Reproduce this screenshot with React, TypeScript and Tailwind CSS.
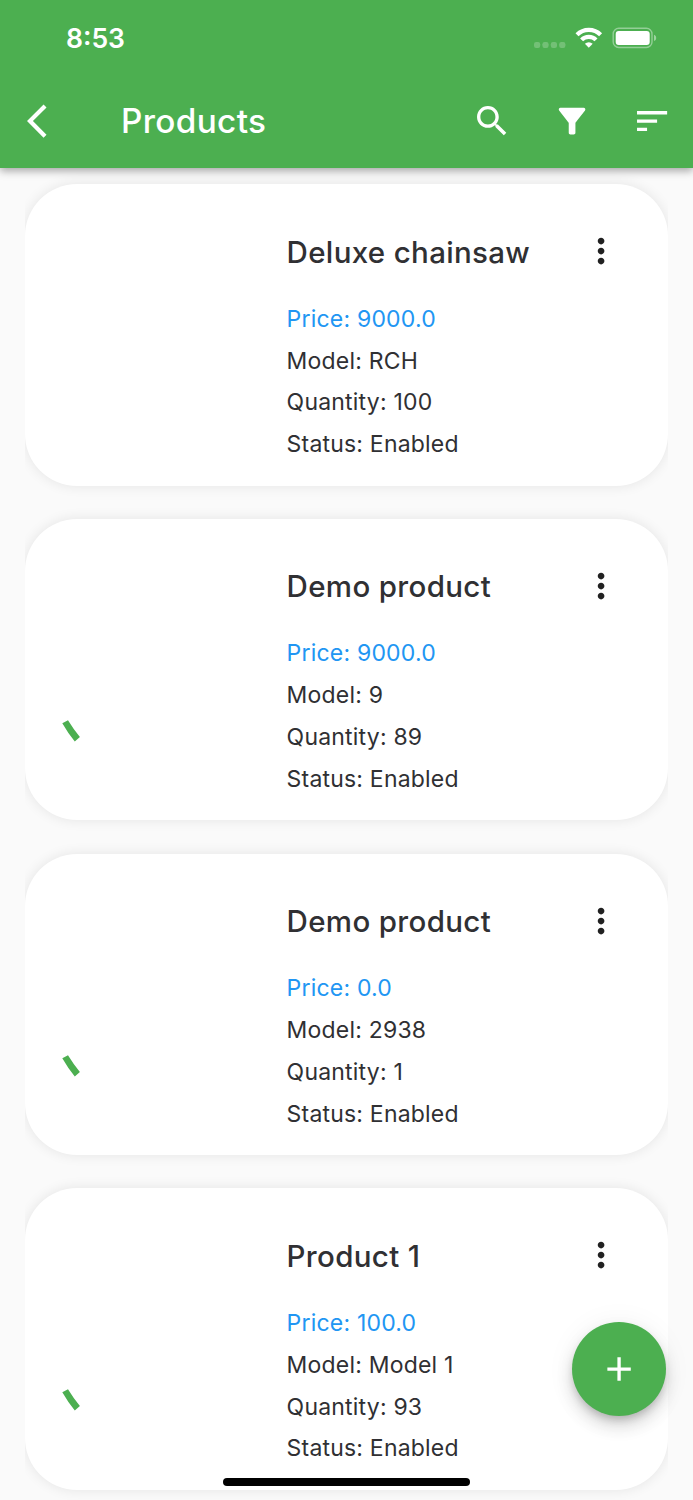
import type { ReactNode } from "react";

type Product = {
  name: string;
  price: string;
  model: string;
  quantity: string;
  loading: boolean;
};

const products: Product[] = [
  { name: "Deluxe chainsaw", price: "9000.0", model: "RCH", quantity: "100", loading: false },
  { name: "Demo product", price: "9000.0", model: "9", quantity: "89", loading: true },
  { name: "Demo product", price: "0.0", model: "2938", quantity: "1", loading: true },
  { name: "Product 1", price: "100.0", model: "Model 1", quantity: "93", loading: true },
];

function Icon({ d }: { d: string }) {
  return (
    <svg viewBox="0 0 24 24" className="block size-[40.17px] shrink-0" fill="currentColor">
      <path d={d} />
    </svg>
  );
}

function IconButton({ label, children }: { label: string; children: ReactNode }) {
  return (
    <button aria-label={label} className="flex size-[80px] shrink-0 items-center justify-center">
      {children}
    </button>
  );
}

function StatusBar() {
  return (
    <div className="flex h-[73.6px] items-start pl-[66px] pr-[36px]">
      <div className="mt-[22px] text-[26.5px] leading-[32px] font-semibold">8:53</div>
      <svg viewBox="0 0 124 24" width="124" height="24" className="mt-[26px] ml-auto block" fill="none">
        <g fill="#fff" opacity="0.22">
          <rect x="1" y="16" width="6.2" height="6" rx="2.2" />
          <rect x="9.4" y="16" width="6.2" height="6" rx="2.2" />
          <rect x="17.8" y="16" width="6.2" height="6" rx="2.2" />
          <rect x="26.2" y="16" width="6.2" height="6" rx="2.2" />
        </g>
        <g stroke="#fff" strokeWidth="4.2">
          <path d="M44 8.800A16.600 16.600 0 0 1 67.600 8.800" />
          <path d="M48.600 13.900A10 10 0 0 1 63 13.900" />
        </g>
        <path d="M51.900 17.800A5.800 5.800 0 0 1 59.700 17.800L55.800 21.800Z" fill="#fff" />
        <rect x="80.200" y="2.300" width="38.800" height="19.200" rx="5.600" stroke="#fff" strokeWidth="1.400" opacity="0.4" />
        <rect x="82.700" y="4.900" width="34" height="14" rx="3" fill="#fff" />
        <path d="M121 8.800c1.400.5 2.200 1.700 2.200 3.100s-.8 2.600-2.200 3.100z" fill="#fff" opacity="0.45" />
      </svg>
    </div>
  );
}

function ProductCard({ product }: { product: Product }) {
  return (
    <article className="flex h-[301.3px] w-full shrink-0 rounded-[52px] bg-white shadow-[0_0_13px_rgba(0,0,0,0.09)]">
      <div className="w-[261.6px] shrink-0 pt-[200px] pl-[36px]">
        {product.loading && (
          <svg viewBox="0 0 20 24" width="20" height="24" className="block" fill="#4caf50">
            <path d="M1.300 4.200 7 1.200Q12.600 10.400 18.900 17.900L13.800 22.600Q7 14.100 1.300 4.200Z" />
          </svg>
        )}
      </div>
      <div className="min-w-0 flex-1 pt-[27px]">
        <div className="flex h-[80px] items-center">
          <h2 className="flex-1 pt-[1px] text-[29.5px] leading-[40px] font-medium tracking-[0.33px] whitespace-nowrap text-[#303033]">
            {product.name}
          </h2>
          <div className="mr-[27px] text-[#212121]">
            <IconButton label="More">
              <Icon d="M12 8c1.100 0 2-.9 2-2s-.9-2-2-2-2 .9-2 2 .9 2 2 2zm0 2c-1.100 0-2 .9-2 2s.9 2 2 2 2-.9 2-2-.9-2-2-2zm0 6c-1.100 0-2 .9-2 2s.9 2 2 2 2-.9 2-2-.9-2-2-2z" />
            </IconButton>
          </div>
        </div>
        <div className="pt-[7.500px] text-[23px] leading-[41.85px] tracking-[0.2px] whitespace-nowrap text-[#303033]">
          <p className="text-[#2196f3]">Price: {product.price}</p>
          <p>Model: {product.model}</p>
          <p>Quantity: {product.quantity}</p>
          <p>Status: Enabled</p>
        </div>
      </div>
    </article>
  );
}

export default function App() {
  return (
    <div className="relative flex h-[1500px] w-[693px] flex-col overflow-hidden bg-[#fafafa] font-[Inter,sans-serif]">
      <header className="relative z-10 h-[167.6px] shrink-0 bg-[#4caf50] text-white shadow-[0_3px_8px_rgba(0,0,0,0.34)]">
        <StatusBar />
        <div className="flex h-[94px] items-center pl-[27px] pr-[1px]">
          <button aria-label="Back" className="flex w-[94px] shrink-0">
            <Icon d="M11.670 3.870L9.900 2.100 0 12l9.900 9.900 1.770-1.770L3.540 12z" />
          </button>
          <h1 className="flex-1 pt-[1px] text-[33.3px] leading-[40px] font-medium tracking-[0.35px]">Products</h1>
          <IconButton label="Search">
            <Icon d="M15.500 14h-.79l-.28-.27C15.410 12.590 16 11.110 16 9.500 16 5.910 13.090 3 9.500 3S3 5.910 3 9.500 5.910 16 9.500 16c1.610 0 3.090-.59 4.230-1.570l.27.28v.79l5 4.990L20.490 19l-4.990-5zm-6 0C7.010 14 5 11.990 5 9.500S7.010 5 9.500 5 14 7.010 14 9.500 11.990 14 9.500 14z" />
          </IconButton>
          <IconButton label="Filter">
            <Icon d="M4.250 5.610C6.270 8.200 10 13 10 13v6c0 .55.45 1 1 1h2c.55 0 1-.45 1-1v-6s3.720-4.800 5.740-7.390c.51-.66.04-1.610-.79-1.610H5.040c-.83 0-1.300.95-.79 1.610z" />
          </IconButton>
          <IconButton label="Sort">
            <Icon d="M3 18h6v-2H3v2zM3 6v2h18V6H3zm0 7h12v-2H3v2z" />
          </IconButton>
        </div>
      </header>

      <main className="mx-[25px] flex min-h-0 flex-1 flex-col gap-[33.4px] overflow-hidden pt-[16.7px]">
        {products.map((product, i) => (
          <ProductCard key={i} product={product} />
        ))}
      </main>

      <button
        aria-label="Add product"
        className="absolute top-[1322.3px] left-[572px] flex size-[93.8px] items-center justify-center rounded-full bg-[#4caf50] text-white shadow-[0_5px_8px_-2px_rgba(0,0,0,0.2),0_10px_17px_rgba(0,0,0,0.14),0_2px_30px_rgba(0,0,0,0.06)]"
      >
        <Icon d="M19 13h-6v6h-2v-6H5v-2h6V5h2v6h6v2z" />
      </button>
      <div className="absolute top-[1478px] left-[222.500px] h-[8.400px] w-[247.6px] rounded-full bg-black" />
    </div>
  );
}
